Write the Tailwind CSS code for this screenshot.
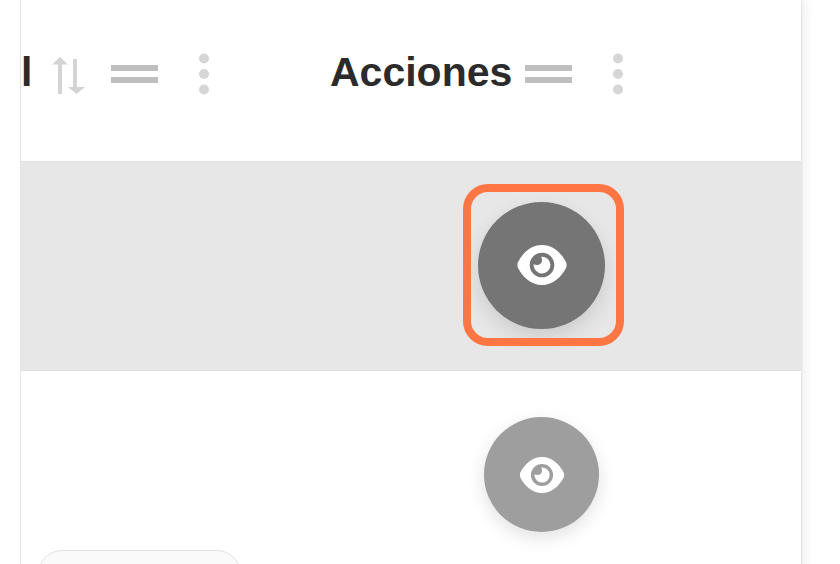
<!DOCTYPE html>
<html lang="es">
<head>
<meta charset="utf-8">
<meta name="viewport" content="width=device-width, initial-scale=1">
<title>Acciones</title>
<script src="https://cdn.jsdelivr.net/npm/@tailwindcss/browser@4"></script>
</head>
<body class="bg-white font-['Liberation_Sans',Arial,sans-serif] text-[#2b2b2b]">
<svg class="hidden" aria-hidden="true">
  <symbol id="eye" viewBox="0 0 50 40"><path fill="currentColor" fill-rule="evenodd" d="M.8 17.500C5.500 8 14 0 25 0S44.500 8 49.200 17.500q.8 2.500 0 5C44.500 32 36 40 25 40S5.500 32 .8 22.500q-.8-2.500 0-5zM25 7.700a12.300 12.300 0 1 0 0 24.600 12.300 12.300 0 1 0 0-24.600zM24.200 11.700A8.400 8.400 0 1 1 16.700 19.200C20 21 25 19.500 25 15.500C25 14 24.700 12.800 24.200 11.700z"/></symbol>
  <symbol id="grip" viewBox="0 0 47 18"><path fill="#bfbfbf" d="M0 0h47v6H0zM0 12h47v6H0z"/></symbol>
  <symbol id="dots" viewBox="0 0 10 42"><g fill="#d6d6d6"><circle cx="5" cy="5.5" r="5"/><circle cx="5" cy="21" r="5"/><circle cx="5" cy="36.5" r="5"/></g></symbol>
  <symbol id="sort" viewBox="0 0 34 40"><path fill="#d4d4d4" d="M9 3 17 10.500H11V40H7V10.500H1zM22 5h4v28h8l-8.500 7L17 33H22z"/></symbol>
</svg>
<div class="relative h-screen overflow-hidden pl-5 pr-[39px]">
  <main class="min-h-full border-l border-[#e4e4ea] shadow-[6px_0_10px_rgba(0,0,0,0.05),1px_0_2px_rgba(0,0,0,0.08)]">
    <table class="w-full table-fixed border-separate border-spacing-0">
      <thead>
        <tr class="h-[162px] text-left text-[41px] leading-[44px] font-bold">
          <th class="w-1/3 border-b border-[#e0e0e0] p-0 pb-[14px]">
            <div class="flex items-center">
              <span class="pb-1">l</span>
              <button type="button" aria-label="Ordenar" class="ml-[19px] h-10 w-[34px]"><svg class="size-full"><use href="#sort"/></svg></button>
              <svg class="ml-[26px] h-[18px] w-[47px]" aria-hidden="true"><use href="#grip"/></svg>
              <button type="button" aria-label="Menú de columna" class="ml-[41px] h-[42px] w-[10px]"><svg class="size-full"><use href="#dots"/></svg></button>
            </div>
          </th>
          <th class="border-b border-[#e0e0e0] p-0 pb-[14px] pl-[49px]">
            <div class="flex items-center">
              <span class="pb-1">Acciones</span>
              <svg class="ml-[13px] h-[18px] w-[47px]" aria-hidden="true"><use href="#grip"/></svg>
              <button type="button" aria-label="Menú de columna" class="ml-[41px] h-[42px] w-[10px]"><svg class="size-full"><use href="#dots"/></svg></button>
            </div>
          </th>
        </tr>
      </thead>
      <tbody>
        <tr class="h-[209px] bg-[#e7e7e7]">
          <td class="border-b border-[#dfdfdf] p-0"></td>
          <td class="border-b border-[#dfdfdf] p-0 pb-[2px] pl-[2px]">
            <div class="flex justify-center">
              <div class="relative">
                <button type="button" aria-label="Ver" class="flex size-[127px] items-center justify-center rounded-full bg-[#757575] text-white shadow-[0_8px_20px_rgba(0,0,0,0.12)]"><svg class="h-10 w-[50px]"><use href="#eye"/></svg></button>
                <span class="pointer-events-none absolute -top-[18px] -right-[19px] -bottom-[17px] -left-[15px] rounded-[25px] border-8 border-[#ff7543]"></span>
              </div>
            </div>
          </td>
        </tr>
        <tr class="h-[209px]">
          <td class="p-0"></td>
          <td class="p-0 pb-[2px] pl-[2px]">
            <div class="flex justify-center">
              <button type="button" aria-label="Ver" class="flex size-[115px] items-center justify-center rounded-full bg-[#9e9e9e] text-white shadow-[0_6px_18px_rgba(0,0,0,0.12)]"><svg class="h-9 w-[46px]"><use href="#eye"/></svg></button>
            </div>
          </td>
        </tr>
      </tbody>
    </table>
  </main>
  <div class="absolute -bottom-8 left-[38px] h-[46px] w-[203px] rounded-t-[24px] border border-[#e2e2e2] bg-[#fafafa]"></div>
</div>
</body>
</html>
